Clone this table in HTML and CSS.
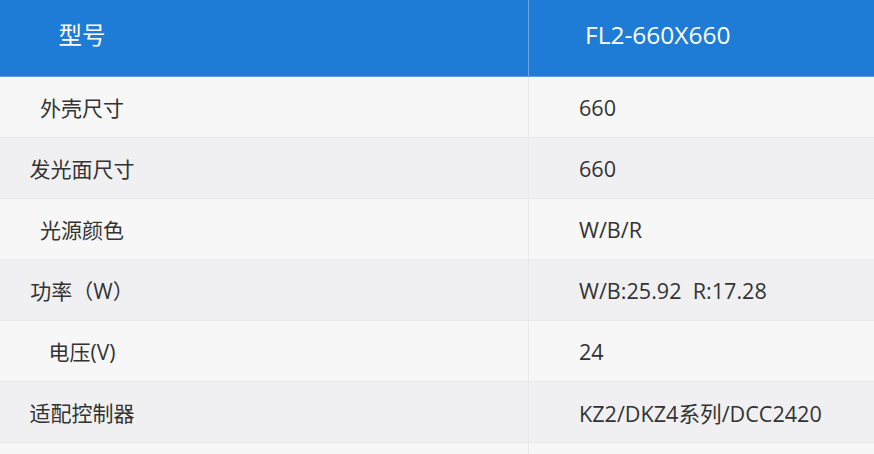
FILE: index.html
```html
<!DOCTYPE html>
<html lang="zh">
<head>
<meta charset="utf-8">
<link rel="stylesheet" href="styles.css">
</head>
<body>
<table class="spec">
  <thead>
    <tr class="head">
      <th class="c-label"><span class="label">型号</span></th>
      <th class="c-value head-value">FL2-660X660</th>
    </tr>
  </thead>
  <tbody>
    <tr class="odd"><td class="c-label"><span class="label">外壳尺寸</span></td><td class="c-value">660</td></tr>
    <tr class="even"><td class="c-label"><span class="label">发光面尺寸</span></td><td class="c-value">660</td></tr>
    <tr class="odd"><td class="c-label"><span class="label">光源颜色</span></td><td class="c-value">W/B/R</td></tr>
    <tr class="even"><td class="c-label"><span class="label">功率（W）</span></td><td class="c-value">W/B:25.92&nbsp;&nbsp;R:17.28</td></tr>
    <tr class="odd"><td class="c-label"><span class="label">电压(V)</span></td><td class="c-value">24</td></tr>
    <tr class="even"><td class="c-label"><span class="label">适配控制器</span></td><td class="c-value">KZ2/DKZ4系列/DCC2420</td></tr>
    <tr class="odd tail"><td class="c-label"></td><td class="c-value"></td></tr>
  </tbody>
</table>
</body>
</html>
```

FILE: styles.css
```css
html, body {
  margin: 0;
  padding: 0;
  background: #f7f7f7;
}
body {
  font-family: "Open Sans", "Noto Sans CJK SC", sans-serif;
  color: #333333;
  overflow: hidden;
  height: 454px;
}
.spec {
  width: 874px;
  border-collapse: collapse;
  table-layout: fixed;
}
.spec th, .spec td {
  padding: 0;
  font-weight: normal;
  text-align: left;
  vertical-align: middle;
}
.c-label {
  width: 528px;
  border-right: 1px solid #e9e9ea;
}
.head th {
  height: 68px;
  padding-bottom: 8px;
  background: #1e7cd6;
  color: #ffffff;
  font-size: 23.5px;
  border-bottom: 1px solid #5c9de2;
}
.head .c-label {
  border-right: 1px solid #6aa6e4;
}
.spec .head .head-value {
  padding-left: 56px;
  font-size: 24.5px;
}
.spec td {
  height: 60px;
  font-size: 21px;
  border-bottom: 1px solid #e9e9ea;
}
.odd td { background: #f7f7f7; }
.even td { background: #f0f0f2; }
.label {
  display: inline-block;
  width: 106px;
  margin-left: 29px;
  text-align: center;
  white-space: nowrap;
}
.spec .c-value {
  padding-left: 50px;
  white-space: nowrap;
}
.spec td.c-value {
  font-size: 21.6px;
}
.tail td {
  border-bottom: none;
}
```
